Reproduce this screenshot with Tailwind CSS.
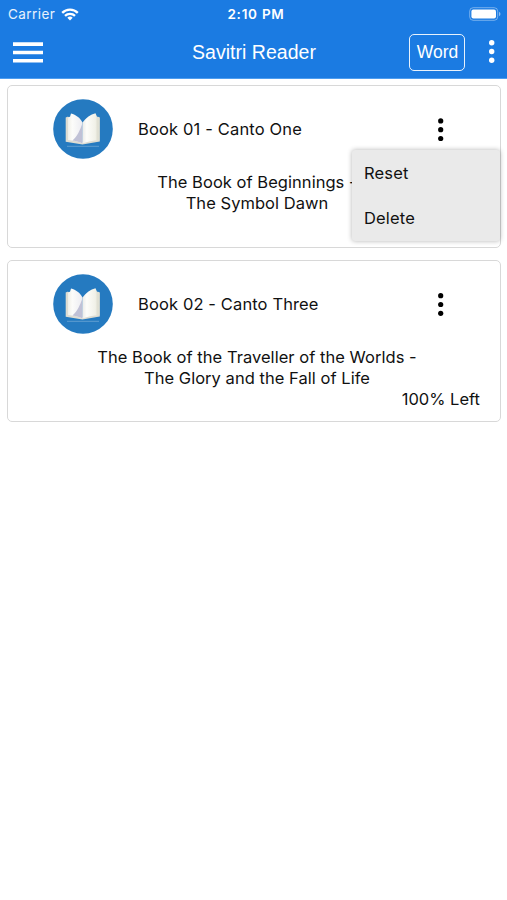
<!DOCTYPE html>
<html lang="en">
<head>
<meta charset="utf-8">
<title>Savitri Reader</title>
<script src="https://cdn.jsdelivr.net/npm/@tailwindcss/browser@4"></script>
</head>
<body class="h-[900px] w-[507px] overflow-hidden bg-white font-['Inter',sans-serif] text-[#111]">
<svg class="absolute size-0">
  <defs>
    <linearGradient id="pl" x1="0" x2="1" y1="0" y2="0"><stop offset="0" stop-color="#f0efe8"/><stop offset=".3" stop-color="#fcfcfa"/><stop offset="1" stop-color="#ececf2"/></linearGradient>
    <linearGradient id="pr" x1="0" x2="1" y1="0" y2="0"><stop offset="0" stop-color="#ecece8"/><stop offset=".25" stop-color="#fdfdfa"/><stop offset=".75" stop-color="#f1f1e8"/><stop offset="1" stop-color="#dadacd"/></linearGradient>
    <symbol id="book" viewBox="0 0 60 60">
      <circle cx="30" cy="30" r="29.800" fill="#257ac0"/>
      <path d="M12.700 18.500l2.500-1V39l14.300 4.500L44.500 39V17.500l2.300 1V42.500L29.500 45.500 12.700 42.800z" fill="#dddcd2"/>
      <path d="M15 41V18.200l2-.4 1-3.300C23 16 27 18.500 29.500 23.500V44.500C25 42.300 20 41.500 15 41z" fill="url(#pl)"/>
      <path d="M29 25.500C27 31 24.500 37 19.500 41.500c4 .5 7.500 1.600 10 3z" fill="#c0c1d6"/>
      <path d="M29.500 44.500V23.500C33 18.500 37.500 15.500 42.500 14.200l1.500 3.600 2.500 1V41.200C40 41.400 34.500 42.500 29.500 44.500z" fill="url(#pr)"/>
      <path d="M44.200 18v23" stroke="#d8d8cc" stroke-width=".6"/>
      <path d="M14 47.300h32" stroke="#6fa7d4" stroke-width=".8"/>
    </symbol>
  </defs>
</svg>

<header class="h-[79px] border-b border-[#4d9df0] bg-[#1b7be2] text-white">
  <div class="grid h-7 grid-cols-3 items-center pr-1.5 pl-2">
    <div class="flex items-center gap-[6px] text-[13.500px] tracking-[0.450px] text-white/90">
      <span>Carrier</span>
      <svg class="h-[13px] w-[18px]" viewBox="0 0 18 13" fill="none" stroke="#fff" stroke-width="2.300"><path d="M1.200 4.900a11 11 0 0 1 15.600 0M4 7.900a7 7 0 0 1 10 0"/><path d="M9 12.500L6.300 9.800a3.800 3.800 0 0 1 5.400 0z" fill="#fff" stroke="none"/></svg>
    </div>
    <div class="pl-[3px] text-center text-[13.500px] font-semibold tracking-[0.750px] whitespace-nowrap">2:10 PM</div>
    <svg class="h-[14px] w-[32px] justify-self-end" viewBox="0 0 32 14"><rect x=".7" y=".7" width="28" height="12.600" rx="3.500" fill="none" stroke="#fff" stroke-opacity=".4"/><rect x="2.400" y="2.400" width="24.600" height="9.200" rx="2" fill="#fff"/><path d="M30 4.800c2 .8 2 3.600 0 4.400z" fill="#fff" fill-opacity=".5"/></svg>
  </div>
  <div class="grid h-12 grid-cols-[1fr_auto_1fr] items-center pr-[12px] pl-[13px] font-['Liberation_Sans',sans-serif]">
    <svg class="h-[21px] w-[30px]" viewBox="0 0 30 21" fill="#fff"><path d="M0 .3h30v3.600H0zM0 8.700h30v3.600H0zM0 17h30v3.600H0z"/></svg>
    <h1 class="text-[19.500px] leading-6 tracking-[0.020px]">Savitri Reader</h1>
    <div class="flex items-center justify-end gap-[24px]">
      <div class="flex h-[37px] w-[56px] items-center justify-center rounded-[5px] border-[1.500px] border-white/90 pl-px text-[17.500px]">Word</div>
      <svg class="h-[24px] w-[6px]" viewBox="0 0 6 24" fill="#fff"><circle cx="2.700" cy="2.700" r="2.700"/><circle cx="2.700" cy="11.500" r="2.700"/><circle cx="2.700" cy="20.300" r="2.700"/></svg>
    </div>
  </div>
</header>

<main class="flex flex-col gap-[12px] px-[7px] pt-[6px] text-[16.500px]">
  <article class="relative h-[163px] w-[494px] rounded-[5px] border border-[#d8d8d8] pt-[13px]">
    <div class="flex h-[61px] items-center pr-[56px] pl-[45px]">
      <svg class="size-[60px] shrink-0 self-start"><use href="#book"/></svg>
      <h2 class="ml-[25px] flex-1 tracking-[0.150px] whitespace-nowrap">Book 01 - Canto One</h2>
      <svg class="h-[24px] w-[6px]" viewBox="0 0 6 24" fill="#000"><circle cx="2.700" cy="2.900" r="2.600"/><circle cx="2.700" cy="11.700" r="2.600"/><circle cx="2.700" cy="20.500" r="2.600"/></svg>
    </div>
    <p class="mt-[12px] pl-[6px] text-center leading-[21px] tracking-[0.040px]">The Book of Beginnings -<br>The Symbol Dawn</p>
    <div class="absolute top-[64px] left-[344px] flex h-[91px] w-[148px] flex-col rounded-[3px] bg-[#eaeaea] pl-[12px] shadow-[0_0_5px_rgba(0,0,0,0.3)]">
      <div class="flex h-[46px] items-center tracking-[0.150px]">Reset</div>
      <div class="flex h-[44px] items-center tracking-[0.150px]">Delete</div>
    </div>
  </article>
  <article class="h-[162px] w-[494px] rounded-[5px] border border-[#d8d8d8] pt-[13px]">
    <div class="flex h-[61px] items-center pr-[56px] pl-[45px]">
      <svg class="size-[60px] shrink-0 self-start"><use href="#book"/></svg>
      <h2 class="ml-[25px] flex-1 tracking-[0.120px] whitespace-nowrap">Book 02 - Canto Three</h2>
      <svg class="h-[24px] w-[6px]" viewBox="0 0 6 24" fill="#000"><circle cx="2.700" cy="2.700" r="2.600"/><circle cx="2.700" cy="11.500" r="2.600"/><circle cx="2.700" cy="20.300" r="2.600"/></svg>
    </div>
    <p class="mt-[12px] pl-[6px] text-center leading-[21px] tracking-[0.040px]">The Book of the Traveller of the Worlds -<br>The Glory and the Fall of Life</p>
    <p class="pr-[20px] text-right leading-[21px]">100% Left</p>
  </article>
</main>
</body>
</html>
